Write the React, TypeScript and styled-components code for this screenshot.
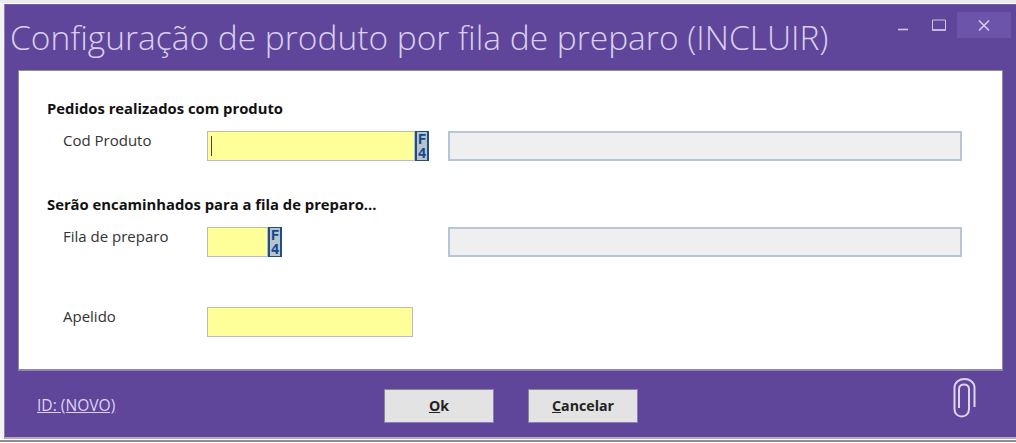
import React from "react";
import styled, { createGlobalStyle } from "styled-components";

const GlobalStyle = createGlobalStyle`
  html, body {
    margin: 0;
    padding: 0;
    width: 1016px;
    height: 443px;
    overflow: hidden;
    background: #f4f4f6;
  }
`;

const Screen = styled.div`
  display: flex;
  flex-direction: column;
  width: 1016px;
  height: 443px;
  font-family: "Open Sans", "Noto Sans", sans-serif;
`;

const TopStrip = styled.div`
  height: 4px;
  box-sizing: border-box;
  background: #e8ebf2;
  border-bottom: 1px solid #fff;
`;

const Window = styled.div`
  flex: 1;
  display: flex;
  flex-direction: column;
  margin-left: 4px;
  background: #5f469b;
  border-left: 1px solid #8f82b4;
  border-top: 1px solid #75619f;
  border-bottom: 2px solid #b5a6d6;
`;

const TitleBar = styled.div`
  display: flex;
  justify-content: space-between;
  height: 65px;
  padding: 0 5px 0 5px;
`;

const Title = styled.h1`
  margin: 9px 0 0;
  font-size: 33.5px;
  line-height: 46px;
  font-weight: 300;
  color: #d9d0ec;
  white-space: nowrap;
`;

const WindowControls = styled.div`
  display: flex;
  align-items: flex-start;
  margin-top: 7px;
`;

const ControlButton = styled.div<{ $hot?: boolean }>`
  display: flex;
  align-items: center;
  justify-content: center;
  width: ${({ $hot }) => ($hot ? "54px" : "36px")};
  height: 26px;
  background: ${({ $hot }) => ($hot ? "#6d54ab" : "transparent")};
`;

const Panel = styled.main`
  display: flex;
  flex-direction: column;
  height: 301px;
  box-sizing: border-box;
  margin: 0 13px 0 13px;
  padding: 27px 28px 0;
  background: #fff;
  border: 1px solid #8f8b9c;
  border-width: 1px 1px 2px 1px;
`;

const SectionTitle = styled.h2<{ $gap?: number }>`
  margin: ${({ $gap }) => $gap ?? 0}px 0 0;
  font-size: 14.8px;
  line-height: 20px;
  font-weight: 700;
  color: #111;
  white-space: nowrap;
`;

const Row = styled.div<{ $gap: number }>`
  display: flex;
  align-items: flex-start;
  height: 30px;
  margin-top: ${({ $gap }) => $gap}px;
  padding-left: 16px;
`;

const Label = styled.label`
  width: 144px;
  font-size: 15px;
  line-height: 18px;
  color: #333;
`;

const FieldGroup = styled.div`
  display: flex;
  width: 241px;
`;

const Input = styled.div<{ $width: number }>`
  position: relative;
  box-sizing: border-box;
  width: ${({ $width }) => $width}px;
  height: 30px;
  background: #ffff99;
  border: 1px solid #b9bcc0;
`;

const Caret = styled.span`
  position: absolute;
  left: 3px;
  top: 4px;
  width: 1px;
  height: 20px;
  background: #444;
`;

const F4Button = styled.div`
  box-sizing: border-box;
  width: 14px;
  height: 30px;
  background: #b9c3ce;
  border: 2px solid #1f4f86;
  border-width: 1px 2px;
  color: #134a8c;
  font: 700 14.5px/14px "DejaVu Sans Mono", monospace;
  text-align: center;
  word-break: break-all;
`;

const DescriptionField = styled.div`
  box-sizing: border-box;
  width: 514px;
  height: 30px;
  background: #efefef;
  border: 2px solid #b7c5d8;
`;

const Footer = styled.footer`
  flex: 1;
  display: flex;
  align-items: center;
  padding: 3px 40px 0 32px;
`;

const RecordLink = styled.a`
  width: 347px;
  margin-top: -2px;
  font-size: 15.6px;
  line-height: 18px;
  color: #dcd3f0;
  text-decoration: underline;
`;

const Button = styled.button`
  box-sizing: border-box;
  width: 110px;
  height: 34px;
  margin-right: 34px;
  padding: 0;
  background: #e3e3e3;
  border: 1px solid #8b82a4;
  color: #222;
  font: 700 14.2px "Open Sans", sans-serif;
  u {
    text-decoration: underline;
  }
`;

const Spacer = styled.div`
  flex: 1;
`;

const PaperClip = styled.svg`
  width: 23px;
  height: 42px;
  margin-top: -16px;
`;

const BottomStrip = styled.div`
  height: 4px;
  box-sizing: border-box;
  background: #f2f2f2;
  border-top: 1px solid #fff;
  border-bottom: 1px solid #fff;
  box-shadow: inset 0 1px 0 #8e8e8e, inset 0 2px 0 #8e8e8e;
`;

export default function App() {
  return (
    <>
      <GlobalStyle />
      <Screen>
        <TopStrip />
        <Window>
          <TitleBar>
            <Title>Configuração de produto por fila de preparo (INCLUIR)</Title>
            <WindowControls>
              <ControlButton>
                <svg width="10" height="12" viewBox="0 0 10 12">
                  <path d="M0 10.500h10" stroke="#cfc6e4" strokeWidth="1.6" />
                </svg>
              </ControlButton>
              <ControlButton>
                <svg width="16" height="12" viewBox="0 0 16 12">
                  <path d="M1.500 1h13v10h-13z" fill="none" stroke="#cfc6e4" strokeWidth="1" />
                  <path d="M1 11h14" stroke="#cfc6e4" strokeWidth="1.6" />
                </svg>
              </ControlButton>
              <ControlButton $hot>
                <svg width="12" height="11" viewBox="0 0 12 11">
                  <path d="M1 .5l10 10M11 .5l-10 10" stroke="#d8d0ea" strokeWidth="1.5" />
                </svg>
              </ControlButton>
            </WindowControls>
          </TitleBar>

          <Panel>
            <SectionTitle>Pedidos realizados com produto</SectionTitle>
            <Row $gap={13}>
              <Label>Cod Produto</Label>
              <FieldGroup>
                <Input $width={208}>
                  <Caret />
                </Input>
                <F4Button>F4</F4Button>
              </FieldGroup>
              <DescriptionField />
            </Row>

            <SectionTitle $gap={33}>Serão encaminhados para a fila de preparo...</SectionTitle>
            <Row $gap={13}>
              <Label>Fila de preparo</Label>
              <FieldGroup>
                <Input $width={61} />
                <F4Button>F4</F4Button>
              </FieldGroup>
              <DescriptionField />
            </Row>

            <Row $gap={50}>
              <Label>Apelido</Label>
              <Input $width={206} />
            </Row>
          </Panel>

          <Footer>
            <RecordLink>ID: (NOVO)</RecordLink>
            <Button>
              <u>O</u>k
            </Button>
            <Button>
              <u>C</u>ancelar
            </Button>
            <Spacer />
            <PaperClip viewBox="0 0 23 42" fill="none">
              <path
                d="M21.500 30V11c0-12-20-12-20 0v21c0 10 14.500 10 14.500 0V12c0-6-10-6-10 0v19"
                stroke="#ddd6ee"
                strokeWidth="2"
              />
            </PaperClip>
          </Footer>
        </Window>
        <BottomStrip />
      </Screen>
    </>
  );
}
